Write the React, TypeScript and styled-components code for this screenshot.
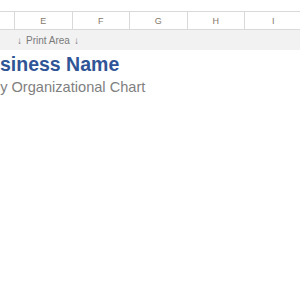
import React from "react";
import styled, { createGlobalStyle } from "styled-components";

const Global = createGlobalStyle`
  html, body { margin: 0; padding: 0; background: #ffffff; }
  body { font-family: "Liberation Sans", Arial, sans-serif; overflow: hidden; }
`;

const Page = styled.div`
  width: 300px;
  height: 300px;
  overflow: hidden;
  background: #ffffff;
  padding-top: 11px;
  box-sizing: border-box;
`;

const HeaderRow = styled.div`
  display: grid;
  grid-template-columns: 15px repeat(5, 57.5px) 1fr;
  height: 17px;
  border-top: 1px solid #d9d9d9;
  border-bottom: 1px solid #d9d9d9;
  background: #ffffff;
`;

const ColCell = styled.div`
  display: flex;
  align-items: center;
  justify-content: center;
  border-right: 1px solid #d9d9d9;
  font-size: 9px;
  color: #86786a;
  &:last-child { border-right: none; }
`;

const PrintBand = styled.div`
  height: 20px;
  background: #f2f2f2;
  display: flex;
  align-items: center;
  padding-left: 17px;
  font-size: 10px;
  color: #7a7a7a;
  gap: 4px;
`;

const TitleBlock = styled.div`
  padding-top: 3px;
  display: flex;
  flex-direction: column;
`;

const Title = styled.div<{ $shift: number }>`
  font-size: 19.5px;
  font-weight: bold;
  color: #2f5597;
  line-height: 23px;
  margin-left: ${(p) => p.$shift}px;
  white-space: nowrap;
`;

const Subtitle = styled.div<{ $shift: number }>`
  font-size: 14.6px;
  color: #7f7f7f;
  line-height: 18px;
  margin-top: 2px;
  margin-left: ${(p) => p.$shift}px;
  white-space: nowrap;
`;

export default function App() {
  const cols = ["", "E", "F", "G", "H", "I", ""];
  return (
    <Page>
      <Global />
      <HeaderRow>
        {cols.map((c, i) => (
          <ColCell key={i}>{c}</ColCell>
        ))}
      </HeaderRow>
      <PrintBand>
        <span>↓</span>
        <span>Print Area</span>
        <span>↓</span>
      </PrintBand>
      <TitleBlock>
        <Title $shift={-26}>Business Name</Title>
        <Subtitle $shift={-55}>Company Organizational Chart</Subtitle>
      </TitleBlock>
    </Page>
  );
}
